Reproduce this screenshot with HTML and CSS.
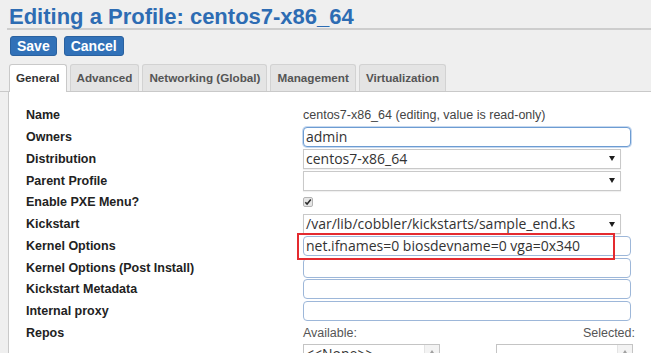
FILE: index.html
```html
<!DOCTYPE html>
<html lang="en">
<head>
<meta charset="utf-8">
<title>Editing a Profile</title>
<link rel="stylesheet" href="styles.css">
</head>
<body>
<h1 class="title">Editing a Profile: centos7-x86_64</h1>
<div class="actions">
  <button class="btn">Save</button>
  <button class="btn">Cancel</button>
</div>
<ul class="tabs">
  <li class="tab active">General</li>
  <li class="tab">Advanced</li>
  <li class="tab">Networking (Global)</li>
  <li class="tab">Management</li>
  <li class="tab">Virtualization</li>
</ul>
<div class="panel">
  <div class="form">
    <div class="label">Name</div>
    <div class="readonly">centos7-x86_64 (editing, value is read-only)</div>

    <div class="label">Owners</div>
    <div class="text-input focused">admin</div>

    <div class="label">Distribution</div>
    <div class="select"><span>centos7-x86_64</span><i class="arrow"></i></div>

    <div class="label">Parent Profile</div>
    <div class="select"><span></span><i class="arrow"></i></div>

    <div class="label">Enable PXE Menu?</div>
    <div class="check-cell">
      <svg class="checkbox" width="10" height="10" viewBox="0 0 10 10">
        <rect x="0.5" y="0.5" width="9" height="9" rx="1.5" fill="#e6e6e6" stroke="#b4b4b4"/>
        <path d="M2.3 5.2 L4.1 7.1 L7.8 2.6" fill="none" stroke="#2a2a2a" stroke-width="1.5"/>
      </svg>
    </div>

    <div class="label">Kickstart</div>
    <div class="select"><span>/var/lib/cobbler/kickstarts/sample_end.ks</span><i class="arrow"></i></div>

    <div class="label">Kernel Options</div>
    <div class="text-input">net.ifnames=0 biosdevname=0 vga=0x340</div>

    <div class="label">Kernel Options (Post Install)</div>
    <div class="text-input"></div>

    <div class="label">Kickstart Metadata</div>
    <div class="text-input"></div>

    <div class="label">Internal proxy</div>
    <div class="text-input"></div>

    <div class="label">Repos</div>
    <div class="repos-head"><span>Available:</span><span>Selected:</span></div>

    <div></div>
    <div class="repos-lists">
      <div class="listbox"><div class="options">&lt;&lt;None&gt;&gt;</div><div class="scroll"><i class="up"></i></div></div>
      <div class="listbox"><div class="options"></div><div class="scroll"><i class="up"></i></div></div>
    </div>
  </div>
</div>
<div class="highlight"></div>
</body>
</html>
```

FILE: styles.css
```css
html, body {
  margin: 0;
  padding: 0;
}

body {
  background: #efefef;
  font-family: "Liberation Sans", Arial, sans-serif;
  color: #222;
  height: 353px;
  overflow: hidden;
  position: relative;
}

.title {
  margin: 0 0 0 7px;
  padding: 6px 0 0 2px;
  height: 22px;
  font-size: 22px;
  line-height: 22px;
  font-weight: 700;
  color: #2d6cb3;
  border-bottom: 2px solid #cdcdcd;
  white-space: nowrap;
}

.actions {
  display: flex;
  gap: 7px;
  margin: 6px 0 0 10px;
}

.btn {
  font: 700 14px/16px "Liberation Sans", Arial, sans-serif;
  color: #fff;
  background: #3171b8;
  border: 1px solid #2a619f;
  border-radius: 3px;
  padding: 1px 6px;
  margin: 0;
}

.tabs {
  display: flex;
  align-items: flex-start;
  gap: 3px;
  list-style: none;
  margin: 8px 0 0;
  padding: 0 0 0 9px;
  height: 27px;
  border-bottom: 1px solid #c9c9c9;
}

.tab {
  height: 26px;
  line-height: 26px;
  padding: 0 6px;
  font-size: 11.7px;
  font-weight: 700;
  color: #555;
  background: #e4e4e4;
  border: 1px solid #d2d2d2;
  border-bottom: none;
  border-radius: 3px 3px 0 0;
  white-space: nowrap;
}

.tab.active {
  background: #fff;
  color: #333;
  border-color: #c9c9c9;
  padding-bottom: 1px;
}

.panel {
  margin-left: 8px;
  background: #fff;
  border-left: 1px solid #c9c9c9;
  padding: 13.25px 0 0 17px;
  height: 400px;
}

.form {
  display: grid;
  grid-template-columns: 277px 332px;
  grid-auto-rows: 20px;
  row-gap: 1.75px;
  align-items: center;
}

.label {
  font-size: 12.5px;
  font-weight: 700;
  color: #222;
  white-space: nowrap;
}

.readonly {
  font-size: 12.5px;
  color: #444;
  white-space: nowrap;
}

.text-input {
  box-sizing: border-box;
  width: 328px;
  height: 20px;
  border: 1px solid #9db7d9;
  border-radius: 4px;
  padding: 0 2px;
  font: 14px/18px "Open Sans", "Segoe UI", sans-serif;
  color: #333;
  background: #fff;
  white-space: nowrap;
}

.text-input.focused {
  border-color: #6d9cd2;
  box-shadow: 0 0 0 1px #c6d9f0;
}

.select {
  box-sizing: border-box;
  width: 318px;
  height: 20px;
  border: 1px solid #c9c9c9;
  box-shadow: 0 1px 1px rgba(0, 0, 0, 0.06);
  padding: 0 5px 0 2px;
  display: flex;
  align-items: center;
  justify-content: space-between;
  font: 14px/18px "Open Sans", "Segoe UI", sans-serif;
  color: #333;
  background: #fff;
  white-space: nowrap;
}

.arrow {
  width: 0;
  height: 0;
  border-left: 3px solid transparent;
  border-right: 3px solid transparent;
  border-top: 5px solid #1e1e1e;
}

.check-cell {
  display: flex;
  align-items: center;
}

.checkbox {
  display: block;
}

.repos-head {
  display: flex;
  justify-content: space-between;
  font-size: 12.5px;
  color: #555;
  width: 332px;
}

.repos-lists {
  display: flex;
  justify-content: space-between;
  align-self: start;
  width: 330px;
  margin-top: -1px;
}

.listbox {
  box-sizing: border-box;
  width: 137px;
  height: 90px;
  border: 1px solid #c4c4c4;
  display: flex;
  background: #fff;
}

.options {
  flex: 1;
  font: 14px/18px "Open Sans", "Segoe UI", sans-serif;
  color: #333;
  padding: 0 2px;
}

.scroll {
  width: 14px;
  background: #f3f3f3;
  border-left: 1px solid #e4e4e4;
  display: flex;
  justify-content: center;
  padding-top: 5px;
}

.up {
  width: 0;
  height: 0;
  border-left: 2px solid transparent;
  border-right: 2px solid transparent;
  border-bottom: 3px solid #a0a0a0;
}

.highlight {
  position: absolute;
  left: 297px;
  top: 233px;
  width: 314px;
  height: 23px;
  border: 2px solid #e42a2f;
  pointer-events: none;
}
```
